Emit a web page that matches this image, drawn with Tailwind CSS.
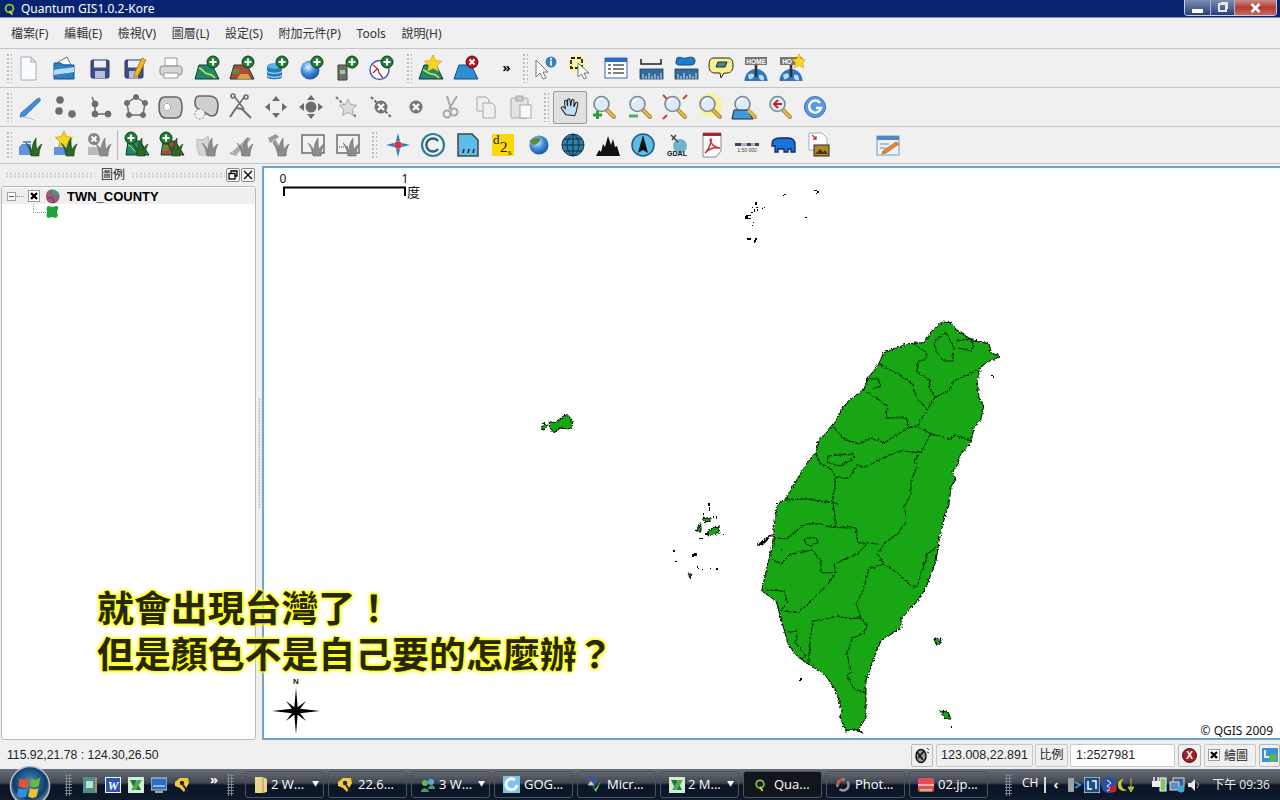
<!DOCTYPE html>
<html lang="zh-Hant">
<head>
    <meta charset="UTF-8">
    <title>Quantum GIS1.0.2-Kore</title>
    <script src="https://cdn.jsdelivr.net/npm/@tailwindcss/browser@4"></script>
</head>
<body class="w-[1280px] h-[800px] overflow-hidden flex flex-col bg-[#f0f0f0] text-[12px] text-[#222] font-['Noto_Sans','Noto_Sans_CJK_TC',sans-serif]">

    <!-- shared icon parts -->
    <svg class="absolute w-0 h-0" aria-hidden="true">
        <defs>
            <radialGradient id="globe" cx="40%" cy="35%" r="70%"><stop offset="0" stop-color="#e8f4ff"/><stop offset=".5" stop-color="#3f8fdc"/><stop offset="1" stop-color="#124f9c"/></radialGradient>
            <radialGradient id="orb" cx="50%" cy="40%" r="60%"><stop offset="0" stop-color="#3f8fc8"/><stop offset=".7" stop-color="#0f3c68"/><stop offset="1" stop-color="#7f98aa"/></radialGradient>
            <filter id="rough" filterUnits="userSpaceOnUse" x="500" y="300" width="560" height="450" color-interpolation-filters="sRGB"><feTurbulence type="turbulence" baseFrequency=".32" numOctaves="2" seed="4" result="n"/><feDisplacementMap in="SourceGraphic" in2="n" scale="3.500" xChannelSelector="R" yChannelSelector="G"/></filter>
            <g id="plus"><circle cx="20" cy="8" r="6" fill="#1e7d35" stroke="#0e3f1b"/><path d="M20 4.500v7M16.500 8h7" stroke="#fff" stroke-width="2.200"/></g>
            <g id="xred"><circle cx="20" cy="8" r="6" fill="#b11a22" stroke="#5a0c10"/><path d="M17.500 5.500l5 5M22.500 5.500l-5 5" stroke="#fff" stroke-width="1.800"/></g>
            <path id="star" d="M12 2l2.600 5.600 6 .7-4.400 4.100 1.200 6-5.400-3-5.400 3 1.200-6L3.400 8.300l6-.7z" fill="#f9d71c" stroke="#c79a10" stroke-width=".7"/>
            <g id="tuft"><path d="M14 26c-1-6-2-9-5-13 3 2 5 5 6 8 0-5 1-9 4-13 0 5 0 8 1 12 1-3 3-5 5-6-2 4-3 8-3 12z" fill="#2f6a22" stroke="#1a3d14" stroke-width=".6"/></g>
            <g id="tuftg"><path d="M14 26c-1-6-2-9-5-13 3 2 5 5 6 8 0-5 1-9 4-13 0 5 0 8 1 12 1-3 3-5 5-6-2 4-3 8-3 12z" fill="#8c8c8c" stroke="#6f6f6f" stroke-width=".6"/></g>
            <g id="lens"><path d="M17 17l7 7" stroke="#b98a2c" stroke-width="4" stroke-linecap="round"/><path d="M17 17l7 7" stroke="#f0c65e" stroke-width="1.600" stroke-linecap="round"/><circle cx="11.500" cy="11" r="7.500" fill="#dcebf6" stroke="#7d8a96" stroke-width="1.600"/><path d="M7 10a5 5 0 0 1 5-4" stroke="#fff" stroke-width="1.500" fill="none"/></g>
            <g id="ruler"><rect x="3" y="15" width="23" height="10" fill="#356a9c" stroke="#1d3d5c" stroke-width=".8"/><path d="M6 25v-5M9 25v-3M12 25v-6M15 25v-3M18 25v-5M21 25v-3M24 25v-6" stroke="#cfe6f5"/></g>
            <g id="earth"><path d="M2.500 27a11.500 12 0 0 1 23 0z" fill="#2f78c0"/><path d="M6 21c3-2 5-2 6 0s-3 5-5 4zM17 21c3-1 5 1 5 4s-4 1-5-1z" fill="#bcdcf2"/><path d="M14 11v12" stroke="#333" stroke-width="2.600"/></g>
        </defs>
    </svg>

    <!-- title bar -->
    <div class="h-[20px] shrink-0 flex items-start bg-[#f0f0f0]">
        <div class="h-[18px] flex-1 flex items-center bg-[#06246f] border-b border-[#7f93bc] relative">
            <svg class="w-[13px] h-[14px] ml-[3px]" viewBox="0 0 14 14"><circle cx="7" cy="6.500" r="4.200" fill="none" stroke="#8fc13c" stroke-width="2"/><path d="M7 9l3 4" stroke="#e8d23c" stroke-width="2"/></svg>
            <span class="ml-[5px] text-white text-[12px] leading-none">Quantum GIS1.0.2-Kore</span>
            <div class="absolute right-[3px] top-0 h-[16px] w-[93px] flex rounded-b-[4px] border border-t-0 border-[#c8d0e0] overflow-hidden">
                <div class="w-[26px] flex items-center justify-center bg-gradient-to-b from-[#7d8cb0] to-[#23407f] border-r border-[#aab5cc]"><div class="w-[11px] h-[4px] bg-white mt-[6px]"></div></div>
                <div class="w-[24px] flex items-center justify-center bg-gradient-to-b from-[#7d8cb0] to-[#23407f] border-r border-[#aab5cc]"><div class="w-[9px] h-[9px] border-2 border-[#e8e8e8] shadow-[2px_-2px_0_-1px_#e8e8e8]"></div></div>
                <div class="flex-1 flex items-center justify-center bg-gradient-to-b from-[#c88a88] via-[#b23a2c] to-[#c9665e]"><svg class="w-[11px] h-[10px]" viewBox="0 0 11 10"><path d="M1.500 1l8 8M9.500 1l-8 8" stroke="#fff" stroke-width="2.600"/></svg></div>
            </div>
        </div>
    </div>

    <!-- menu bar -->
    <div class="h-[29px] shrink-0 flex items-center gap-[15.700px] pl-[11px] border-b border-[#c4c4c4] text-[#333]">
        <span>檔案(F)</span><span>編輯(E)</span><span>檢視(V)</span><span>圖層(L)</span><span>設定(S)</span><span>附加元件(P)</span><span>Tools</span><span>說明(H)</span>
    </div>

    <!-- toolbar 1 -->
    <div class="h-[39px] shrink-0 flex items-center border-b border-[#c4c4c4] pl-[6px] pb-[1px]">
        <div class="w-[6px] h-[30px] bg-[radial-gradient(circle,#bdbdbd_1px,transparent_1.200px)] bg-[length:4px_4px]"></div>
        <div class="flex ml-[-2px]">
            <div class="w-[36px] flex justify-center"><svg class="w-7 h-7" viewBox="0 0 28 28"><path d="M7 3h10l5 5v18H7z" fill="#fbfcfe" stroke="#a3adc0"/><path d="M17 3v5h5z" fill="#dfe4ee" stroke="#a3adc0"/></svg></div>
            <div class="w-[36px] flex justify-center"><svg class="w-7 h-7" viewBox="0 0 28 28"><path d="M5 11l3-3 9-5 4 8z" fill="#fff" stroke="#667"/><path d="M4 9h7l2 2h11v14H4z" fill="#2f7fc8" stroke="#1c4f8a"/><path d="M4 16c7-2 13-1 20-3v5c-7 2-13 1-20 3z" fill="#b4dcf5"/></svg></div>
            <div class="w-[36px] flex justify-center"><svg class="w-7 h-7" viewBox="0 0 28 28"><rect x="5" y="6" width="18" height="18" rx="1.500" fill="#3e4f86" stroke="#2a3563"/><rect x="8" y="6.500" width="12" height="7" fill="#eceff7"/><rect x="9" y="17" width="10" height="7" fill="#b6c0de"/></svg></div>
            <div class="w-[35px] flex justify-center"><svg class="w-7 h-7" viewBox="0 0 28 28"><rect x="3" y="6" width="18" height="18" rx="1.500" fill="#3e4f86" stroke="#2a3563"/><rect x="6" y="6.500" width="12" height="7" fill="#eceff7"/><rect x="7" y="17" width="9" height="7" fill="#b6c0de"/><path d="M12 20L20 4l4 2-8 16-4 1z" fill="#f1b32c" stroke="#a87412" stroke-width=".8"/></svg></div>
            <div class="w-[36px] flex justify-center"><svg class="w-7 h-7" viewBox="0 0 28 28"><path d="M8 4h12v8H8z" fill="#fff" stroke="#999"/><rect x="3" y="12" width="22" height="9" rx="2.500" fill="#d6d6d6" stroke="#8a8a8a"/><path d="M7 19h14v5H7z" fill="#fff" stroke="#999"/></svg></div>
            <div class="w-[35px] flex justify-center"><svg class="w-7 h-7" viewBox="0 0 28 28"><path d="M6 11h13l7 14H2z" fill="#1d8a6e" stroke="#0c3b36"/><path d="M6 14c4 1 5 6 9 6s5 2 7 4" stroke="#e8df4a" fill="none" stroke-width="1.500"/><use href="#plus"/></svg></div>
            <div class="w-[35px] flex justify-center"><svg class="w-7 h-7" viewBox="0 0 28 28"><path d="M6 11h13l7 14H2z" fill="#a84a3c" stroke="#0c3b36"/><path d="M5 15h7l-2 5H4z" fill="#5f8a3a"/><path d="M12 20h8l3 5H9z" fill="#d8a23a"/><use href="#plus"/></svg></div>
            <div class="w-[34px] flex justify-center"><svg class="w-7 h-7" viewBox="0 0 28 28"><path d="M5 12v11c0 3 15 3 15 0V12z" fill="#1f7ec0"/><ellipse cx="12.500" cy="12" rx="7.500" ry="3" fill="#5bb0e6"/><path d="M5 17c0 3 15 3 15 0M5 21c0 3 15 3 15 0" stroke="#d6eefa" fill="none"/><use href="#plus"/></svg></div>
            <div class="w-[36px] flex justify-center"><svg class="w-7 h-7" viewBox="0 0 28 28"><circle cx="13" cy="16" r="9.500" fill="url(#globe)"/><use href="#plus"/></svg></div>
            <div class="w-[34px] flex justify-center"><svg class="w-7 h-7" viewBox="0 0 28 28"><path d="M6 11h9v15H6z" fill="#6a7268" stroke="#3e423c"/><rect x="8" y="16" width="5" height="4" fill="#a6c79a"/><use href="#plus"/></svg></div>
            <div class="w-[35px] flex justify-center"><svg class="w-7 h-7" viewBox="0 0 28 28"><circle cx="12.500" cy="16" r="9.500" fill="#fff" stroke="#3a5bb0" stroke-width="1.400"/><path d="M6 11l5 4 1 4 4 5M10 15l-4 4" stroke="#b8262c" fill="none" stroke-width="1.300"/><use href="#plus"/></svg></div>
        </div>
        <div class="w-[6px] h-[30px] ml-[8px] bg-[radial-gradient(circle,#bdbdbd_1px,transparent_1.200px)] bg-[length:4px_4px]"></div>
        <div class="flex ml-[1px]">
            <div class="w-[35px] flex justify-center"><svg class="w-7 h-7" viewBox="0 0 28 28"><path d="M7 11h12l7 14H2z" fill="#1d8a6e" stroke="#0c3b36"/><path d="M6 16c4 1 5 4 9 4s5 2 7 4" stroke="#e8df4a" fill="none" stroke-width="1.500"/><use href="#star" x="4" y="-1"/></svg></div>
            <div class="w-[35px] flex justify-center"><svg class="w-7 h-7" viewBox="0 0 28 28"><path d="M7 11h12l7 14H2z" fill="#2e8fd6" stroke="#114b7c"/><use href="#xred"/></svg></div>
        </div>
        <div class="w-[35px] text-center font-bold text-[13px] leading-none text-black ml-[6px]">»</div>
        <div class="w-[6px] h-[30px] ml-[-2px] bg-[radial-gradient(circle,#bdbdbd_1px,transparent_1.200px)] bg-[length:4px_4px]"></div>
        <div class="flex ml-[-1px]">
            <div class="w-[35px] flex justify-center"><svg class="w-7 h-7" viewBox="0 0 28 28"><path d="M5 6v17l4-4 3 6 3-1-3-6h5z" fill="#fff" stroke="#777"/><circle cx="20" cy="8" r="5.500" fill="#3a7fc4"/><path d="M20 6.500v5" stroke="#fff" stroke-width="1.800"/><circle cx="20" cy="4.700" r="1" fill="#fff"/></svg></div>
            <div class="w-[36px] flex justify-center"><svg class="w-7 h-7" viewBox="0 0 28 28"><circle cx="11" cy="10" r="9" fill="#f7f3a8"/><rect x="5" y="4" width="11" height="10" fill="none" stroke="#222" stroke-width="1.800" stroke-dasharray="4 2"/><path d="M12 9v14l3.500-3 2.500 5 2.500-1-2.500-5h5z" fill="#fff" stroke="#777"/></svg></div>
            <div class="w-[35px] flex justify-center"><svg class="w-7 h-7" viewBox="0 0 28 28"><rect x="3" y="4" width="22" height="20" fill="#fff" stroke="#2d6cc0"/><rect x="3" y="4" width="22" height="4" fill="#2d6cc0"/><path d="M6 11h3M11 11h11M6 15h3M11 15h11M6 19h3M11 19h11" stroke="#555" stroke-width="1.300"/></svg></div>
            <div class="w-[35px] flex justify-center"><svg class="w-7 h-7" viewBox="0 0 28 28"><path d="M4 5v5h20V5" fill="none" stroke="#222" stroke-width="1.500"/><use href="#ruler"/></svg></div>
            <div class="w-[35px] flex justify-center"><svg class="w-7 h-7" viewBox="0 0 28 28"><path d="M5 4c3-2 5 1 9 0s9-2 9 3-5 4-9 4-11 1-10-3z" fill="#1d7bd0" stroke="#114b7c"/><use href="#ruler"/></svg></div>
            <div class="w-[35px] flex justify-center"><svg class="w-7 h-7" viewBox="0 0 28 28"><path d="M7 4h14c4 0 5 3 5 8 0 4-2 7-6 7h-3l-3 5-1-5H8c-4 0-6-3-6-7 0-5 1-8 5-8z" fill="#f7f08e" stroke="#222"/><path d="M9 13l2-5h9l-2 5z" fill="#3c8f7a" stroke="#224"/></svg></div>
            <div class="w-[35px] flex justify-center"><svg class="w-7 h-7" viewBox="0 0 28 28"><rect x="3" y="3" width="22" height="8" fill="#757575"/><text x="14" y="9.500" text-anchor="middle" font-size="6.500" font-weight="700" fill="#fff" font-family="Liberation Sans">HOME</text><use href="#earth"/></svg></div>
            <div class="w-[35px] flex justify-center"><svg class="w-7 h-7" viewBox="0 0 28 28"><rect x="3" y="3" width="22" height="8" fill="#757575"/><text x="10" y="9.500" text-anchor="middle" font-size="6.500" font-weight="700" fill="#fff" font-family="Liberation Sans">HO</text><use href="#earth"/><use href="#star" x="14" y="-2" transform="scale(.85)"/></svg></div>
        </div>
    </div>

    <!-- toolbar 2 -->
    <div class="h-[39px] shrink-0 flex items-center border-b border-[#c4c4c4] pl-[6px]">
        <div class="w-[6px] h-[30px] bg-[radial-gradient(circle,#bdbdbd_1px,transparent_1.200px)] bg-[length:4px_4px]"></div>
        <div class="flex ml-[1px]">
            <div class="w-[34px] flex justify-center"><svg class="w-7 h-7" viewBox="0 0 28 28"><path d="M5 20L21 6c3-2 4 0 3 2L9 23l-5 1z" fill="#3d8fd6" stroke="#2a6cab" stroke-width=".8"/><path d="M5 24c5 0 9 1 13 3" stroke="#bbb" fill="none"/></svg></div>
            <div class="w-[35px] flex justify-center"><svg class="w-7 h-7" viewBox="0 0 28 28" fill="#6d6d6d"><circle cx="9" cy="7" r="3.800"/><circle cx="8" cy="18" r="3.800"/><circle cx="21" cy="21" r="3.800"/></svg></div>
            <div class="w-[36px] flex justify-center"><svg class="w-7 h-7" viewBox="0 0 28 28" fill="#6d6d6d" stroke="#6d6d6d"><path d="M6 4l3 7v10h13l3 1" fill="none" stroke-width="1.500"/><circle cx="9" cy="11" r="3"/><circle cx="9" cy="21" r="3"/><circle cx="22" cy="21" r="3"/></svg></div>
            <div class="w-[35px] flex justify-center"><svg class="w-7 h-7" viewBox="0 0 28 28" fill="#6d6d6d" stroke="#6d6d6d"><path d="M14 4l9 6-2 12H7L5 10z" fill="none" stroke-width="1.500"/><circle cx="14" cy="4" r="2.500"/><circle cx="23" cy="10" r="2.500"/><circle cx="21" cy="22" r="2.500"/><circle cx="7" cy="22" r="2.500"/><circle cx="5" cy="10" r="2.500"/></svg></div>
            <div class="w-[35px] flex justify-center"><svg class="w-7 h-7" viewBox="0 0 28 28"><path d="M8 4h11c5 0 6 4 6 10s-1 11-6 11H9c-5 0-7-5-7-11S3 4 8 4z" fill="#cfcfcf" stroke="#666" stroke-width="1.600"/><circle cx="10" cy="14" r="3.500" fill="#fff" stroke="#888" stroke-dasharray="2 1"/></svg></div>
            <div class="w-[35px] flex justify-center"><svg class="w-7 h-7" viewBox="0 0 28 28"><path d="M7 3h10c6 0 9 4 9 9s-1 11-6 11c-4 0-5-3-8-4-4-1-9-4-9-9 0-4 1-7 4-7z" fill="#cfcfcf" stroke="#666" stroke-width="1.600"/><circle cx="8" cy="21" r="5" fill="#f0f0f0" stroke="#777" stroke-dasharray="2 1.500"/></svg></div>
            <div class="w-[35px] flex justify-center"><svg class="w-7 h-7" viewBox="0 0 28 28" fill="none" stroke="#6d6d6d" stroke-width="1.500"><path d="M7 3l10 13M18 3L9 15"/><circle cx="6" cy="3" r="2"/><circle cx="19" cy="4" r="2"/><path d="M3 24l6-9 6 1 9 9" stroke-width="2"/></svg></div>
            <div class="w-[35px] flex justify-center"><svg class="w-7 h-7" viewBox="0 0 28 28" fill="#6d6d6d"><path d="M14 3l4 5h-8zM14 25l-4-5h8zM3 14l5-4v8zM25 14l-5 4v-8z"/></svg></div>
            <div class="w-[35px] flex justify-center"><svg class="w-7 h-7" viewBox="0 0 28 28" fill="#6d6d6d"><path d="M14 2l4 5h-8zM14 26l-4-5h8zM2 14l5-4v8zM26 14l-5 4v-8z"/><circle cx="14" cy="14" r="5.500"/></svg></div>
            <div class="w-[35px] flex justify-center"><svg class="w-7 h-7" viewBox="0 0 28 28"><path d="M4 4l20 20" stroke="#777" stroke-width="2" stroke-dasharray="3 2"/><path d="M16 6l2.600 5.600 6 .7-4.400 4.100 1.200 6-5.400-3-5.400 3 1.200-6-4.400-4.100 6-.7z" fill="#dcdcdc" stroke="#aaa"/></svg></div>
            <div class="w-[35px] flex justify-center"><svg class="w-7 h-7" viewBox="0 0 28 28"><path d="M4 4l20 20" stroke="#666" stroke-width="2" stroke-dasharray="3 2"/><circle cx="14" cy="14" r="6.500" fill="#777"/><path d="M11 11l6 6M17 11l-6 6" stroke="#fff" stroke-width="2.200"/></svg></div>
            <div class="w-[35px] flex justify-center"><svg class="w-7 h-7" viewBox="0 0 28 28"><circle cx="14" cy="14" r="9" fill="#ececec"/><circle cx="14" cy="14" r="6.500" fill="#777"/><path d="M11 11l6 6M17 11l-6 6" stroke="#fff" stroke-width="2.200"/></svg></div>
            <div class="w-[35px] flex justify-center"><svg class="w-7 h-7" viewBox="0 0 28 28" fill="none" stroke="#a8a8a8" stroke-width="2"><path d="M10 3l4 13M20 3l-8 13"/><circle cx="10" cy="21" r="3.500"/><circle cx="17" cy="19" r="3.500"/></svg></div>
            <div class="w-[35px] flex justify-center"><svg class="w-7 h-7" viewBox="0 0 28 28" fill="#efefef" stroke="#a8a8a8"><path d="M5 4h9l3 3v11H5z"/><path d="M11 10h9l3 3v12H11z"/></svg></div>
            <div class="w-[35px] flex justify-center"><svg class="w-7 h-7" viewBox="0 0 28 28" fill="#e4e4e4" stroke="#a8a8a8"><rect x="4" y="5" width="17" height="20" rx="1.500"/><rect x="9" y="3" width="7" height="5" fill="#ccc"/><rect x="13" y="12" width="11" height="13" fill="#fafafa"/></svg></div>
        </div>
        <div class="w-[6px] h-[30px] ml-[5px] bg-[radial-gradient(circle,#bdbdbd_1px,transparent_1.200px)] bg-[length:4px_4px]"></div>
        <div class="flex items-center ml-[4px]">
            <div class="w-[34px] h-[33px] flex justify-center items-center bg-[#e0e0e0] border border-[#9a9a9a] rounded-[2px] mr-[-1px]"><svg class="w-[22px] h-[22px]" viewBox="0 0 28 28"><path d="M9 24l-6-8c-1-2 1-3 3-2l2 2-1-9c0-2 3-2 3 0l1 6 0-8c0-2 3-2 3 0l1 8 1-7c0-2 3-2 3 0l0 8 2-5c1-2 3-1 3 1l-2 10-2 5z" fill="#bfe0f8" stroke="#222" stroke-width="1.300"/></svg></div>
            <div class="w-[36px] flex justify-center"><svg class="w-7 h-7" viewBox="0 0 28 28"><use href="#lens"/><path d="M3 22h9M7.500 18v8" stroke="#2f9c3c" stroke-width="3"/></svg></div>
            <div class="w-[35px] flex justify-center"><svg class="w-7 h-7" viewBox="0 0 28 28"><use href="#lens"/><path d="M3 23h9" stroke="#58a868" stroke-width="3"/></svg></div>
            <div class="w-[35px] flex justify-center"><svg class="w-7 h-7" viewBox="0 0 28 28"><use href="#lens"/><path d="M2 2l4 4M26 2l-4 4M2 26l4-4" stroke="#d23c3c" stroke-width="2"/></svg></div>
            <div class="w-[35px] flex justify-center"><svg class="w-7 h-7" viewBox="0 0 28 28"><circle cx="14" cy="12" r="12" fill="#f6f3a4"/><use href="#lens"/></svg></div>
            <div class="w-[35px] flex justify-center"><svg class="w-7 h-7" viewBox="0 0 28 28"><use href="#lens"/><path d="M3 17l13 0 6 9H1z" fill="#3d9bd6" stroke="#224"/><path d="M17 17l7 7" stroke="#e0b44c" stroke-width="3.500"/></svg></div>
            <div class="w-[35px] flex justify-center"><svg class="w-7 h-7" viewBox="0 0 28 28"><use href="#lens"/><path d="M16 11H9M12 7l-4 4 4 4" stroke="#c8202a" stroke-width="2" fill="none"/></svg></div>
            <div class="w-[35px] flex justify-center"><svg class="w-7 h-7" viewBox="0 0 28 28"><circle cx="14" cy="14" r="10.500" fill="#5c98e6" stroke="#3a6cc0"/><path d="M19 10a6 6 0 1 0 1 5h-5" fill="none" stroke="#fff" stroke-width="2.400"/></svg></div>
        </div>
    </div>

    <!-- toolbar 3 -->
    <div class="h-[37px] shrink-0 flex items-center border-b border-[#c4c4c4] pl-[6px]">
        <div class="w-[6px] h-[28px] bg-[radial-gradient(circle,#bdbdbd_1px,transparent_1.200px)] bg-[length:4px_4px]"></div>
        <div class="flex ml-[1px]">
            <div class="w-[35px] flex justify-center"><svg class="w-7 h-7" viewBox="0 0 28 28"><path d="M2 17l3-3h9v11H2z" fill="#5f95dc"/><path d="M6 12h8" stroke="#5f95dc" stroke-width="2"/><use href="#tuft"/></svg></div>
            <div class="w-[35px] flex justify-center"><svg class="w-7 h-7" viewBox="0 0 28 28"><path d="M2 17h14v8H2z" fill="#5f95dc"/><use href="#star" x="0" y="-1"/><use href="#tuft"/></svg></div>
            <div class="w-[34px] flex justify-center"><svg class="w-7 h-7" viewBox="0 0 28 28"><path d="M2 17h14v8H2z" fill="#bbb"/><circle cx="8" cy="9" r="6" fill="#888"/><path d="M5.500 6.500l5 5M10.500 6.500l-5 5" stroke="#fff" stroke-width="1.800"/><use href="#tuftg"/></svg></div>
            <div class="w-[1px] h-[30px] bg-[#b5b5b5] mr-[1px]"></div>
            <div class="w-[35px] flex justify-center"><svg class="w-7 h-7" viewBox="0 0 28 28"><path d="M5 11h12l9 14H3z" fill="#1d8a6e" stroke="#0c3b36"/><path d="M5 15c4 1 5 6 9 7" stroke="#e8df4a" fill="none"/><use href="#tuft"/><use href="#plus" x="-12"/></svg></div>
            <div class="w-[35px] flex justify-center"><svg class="w-7 h-7" viewBox="0 0 28 28"><path d="M5 11h12l9 14H3z" fill="#a84a3c" stroke="#0c3b36"/><path d="M5 15h7l-2 6H4z" fill="#5f8a3a"/><use href="#tuft"/><use href="#plus" x="-12"/></svg></div>
            <div class="w-[35px] flex justify-center"><svg class="w-7 h-7" viewBox="0 0 28 28"><path d="M4 9l6 1 5-4 1 6 5 6-5 7H6L4 17z" fill="#d5d5d5" stroke="#bbb"/><use href="#tuftg"/></svg></div>
            <div class="w-[36px] flex justify-center"><svg class="w-7 h-7" viewBox="0 0 28 28"><path d="M4 22L20 7l3 2L9 24z" fill="#aaa"/><path d="M2 23l7 2" stroke="#aaa" stroke-width="2"/><use href="#tuftg"/></svg></div>
            <div class="w-[35px] flex justify-center"><svg class="w-7 h-7" viewBox="0 0 28 28"><path d="M4 8l8-4 3 3-9 6zM8 11l8 13 3-2-8-13z" fill="#9a9a9a"/><use href="#tuftg"/></svg></div>
            <div class="w-[35px] flex justify-center"><svg class="w-7 h-7" viewBox="0 0 28 28"><rect x="3" y="5" width="22" height="18" fill="#f2f2f2" stroke="#6d6d6d" stroke-width="1.500"/><use href="#tuftg"/></svg></div>
            <div class="w-[35px] flex justify-center"><svg class="w-7 h-7" viewBox="0 0 28 28"><rect x="3" y="5" width="22" height="18" fill="#f2f2f2" stroke="#6d6d6d" stroke-width="1.500"/><path d="M5 17h14" stroke="#444" stroke-dasharray="1 1"/><use href="#tuftg"/></svg></div>
        </div>
        <div class="w-[6px] h-[28px] ml-[6px] bg-[radial-gradient(circle,#bdbdbd_1px,transparent_1.200px)] bg-[length:4px_4px]"></div>
        <div class="flex ml-[3px]">
            <div class="w-[35px] flex justify-center"><svg class="w-7 h-7" viewBox="0 0 28 28"><path d="M14 2l2 8h-4zM14 26l-2-8h4zM2 14l8-2v4zM26 14l-8 2v-4z" fill="#2d7fc0"/><circle cx="14" cy="14" r="3.800" fill="#d23040"/></svg></div>
            <div class="w-[35px] flex justify-center"><svg class="w-7 h-7" viewBox="0 0 28 28"><circle cx="14" cy="14" r="11" fill="#eaf4f7" stroke="#2f7f96" stroke-width="2.200"/><path d="M19 10a6.500 6.500 0 1 0 0 8" fill="none" stroke="#3a5f6e" stroke-width="2.400"/></svg></div>
            <div class="w-[35px] flex justify-center"><svg class="w-7 h-7" viewBox="0 0 28 28"><path d="M4 3h14l6 6v16H4z" fill="#5cbcec" stroke="#444" stroke-width="1.500"/><path d="M9 22l1-4M14 22l1-4M19 22l1-4" stroke="#222" stroke-width="1.500"/></svg></div>
            <div class="w-[35px] flex justify-center"><svg class="w-7 h-7" viewBox="0 0 28 28"><rect x="3" y="3" width="22" height="22" fill="#fbd80c"/><text x="4" y="13" font-size="13" fill="#111" font-family="Liberation Serif">d</text><text x="11" y="21" font-size="15" fill="#111" font-family="Liberation Serif">2</text><text x="19" y="24" font-size="9" fill="#111" font-family="Liberation Serif">s</text></svg></div>
            <div class="w-[35px] flex justify-center"><svg class="w-7 h-7" viewBox="0 0 28 28"><circle cx="15" cy="14" r="9.500" fill="url(#globe)"/><path d="M5 10c4-3 8-4 11-3 1 3-2 6-6 7z" fill="#5f8a3a"/></svg></div>
            <div class="w-[35px] flex justify-center"><svg class="w-7 h-7" viewBox="0 0 28 28"><circle cx="14" cy="14" r="11" fill="#2f7fa8" stroke="#234"/><path d="M3 14h22M14 3v22M5 8h18M5 20h18M14 3c-8 5-8 17 0 22M14 3c8 5 8 17 0 22" stroke="#0c2a44" fill="none"/></svg></div>
            <div class="w-[35px] flex justify-center"><svg class="w-7 h-7" viewBox="0 0 28 28"><path d="M2 25l3-6 2 2 2-8 2 3 3-11 3 9 2-6 2 8 2-1 3 10z" fill="#111"/></svg></div>
            <div class="w-[35px] flex justify-center"><svg class="w-7 h-7" viewBox="0 0 28 28"><circle cx="14" cy="14" r="11" fill="#5cbcec" stroke="#2a5f7c" stroke-width="1.600"/><path d="M14 4l5 18-5-3-5 3z" fill="#111"/></svg></div>
            <div class="w-[35px] flex justify-center"><svg class="w-7 h-7" viewBox="0 0 28 28"><circle cx="16" cy="15" r="7" fill="#6fb5c8"/><path d="M7 4l7 7M12 4l-4 5" stroke="#444" stroke-width="1.500"/><text x="13" y="25" text-anchor="middle" font-size="7" font-weight="700" fill="#111" font-family="Liberation Sans">GDAL</text></svg></div>
            <div class="w-[34px] flex justify-center"><svg class="w-7 h-7" viewBox="0 0 28 28"><path d="M5 2h18v18l-5 6H5z" fill="#fff" stroke="#888"/><rect x="5" y="2" width="18" height="3" fill="#b8202a"/><path d="M7 22c4-3 7-13 6-14-2 0 0 8 9 9-6-1-11 1-15 5z" fill="none" stroke="#d0262e" stroke-width="1.500"/></svg></div>
            <div class="w-[36px] flex justify-center"><svg class="w-7 h-7" viewBox="0 0 28 28"><rect x="2" y="12" width="24" height="3" fill="#445"/><rect x="8" y="12" width="6" height="3" fill="#9db8cc"/><rect x="18" y="12" width="4" height="3" fill="#9db8cc"/><text x="14" y="20.500" text-anchor="middle" font-size="5" fill="#444" font-family="Liberation Sans">1:50 000</text></svg></div>
            <div class="w-[35px] flex justify-center"><svg class="w-7 h-7" viewBox="0 0 28 28"><path d="M3 13c0-5 4-6 8-6h8c5 0 7 3 7 7v7h-4v-3h-3v3h-4v-3H9v3H6v-6H3z" fill="#1d72d8" stroke="#0a2c66" stroke-width="1.300"/></svg></div>
            <div class="w-[35px] flex justify-center"><svg class="w-7 h-7" viewBox="0 0 28 28"><path d="M5 2h13l5 5v12H5z" fill="#fff" stroke="#a3adc0"/><rect x="10" y="14" width="15" height="11" fill="#b68a22" stroke="#224"/><path d="M11 23l5-5 3 3 2-2 3 4z" fill="#4a3a10"/><path d="M8 4l4 4M12 5v3H9" stroke="#d23030" stroke-width="1.300" fill="none"/></svg></div>
        </div>
        <div class="w-[35px] flex justify-center ml-[35px]"><svg class="w-7 h-7" viewBox="0 0 28 28"><rect x="3" y="5" width="22" height="19" fill="#e9f1fb" stroke="#7d96b8"/><rect x="3" y="5" width="22" height="4" fill="#4f86c6"/><path d="M6 13h9M6 17h6" stroke="#888"/><path d="M9 20l13-9 3 2-13 9-4 1z" fill="#e8892c" stroke="#a85c12" stroke-width=".7"/></svg></div>
    </div>

    <!-- main area -->
    <div class="flex-1 min-h-0 flex relative">
        <!-- legend dock -->
        <div class="w-[257px] shrink-0 flex flex-col">
            <div class="h-[22px] flex items-center pl-[5px] text-[#222]">
                <div class="w-[90px] h-[6px] bg-[radial-gradient(circle,#cfcfcf_1px,transparent_1.200px)] bg-[length:4px_3px]"></div>
                <span class="w-[36px] text-center leading-none">圖例</span>
                <div class="w-[94px] h-[6px] bg-[radial-gradient(circle,#cfcfcf_1px,transparent_1.200px)] bg-[length:4px_3px]"></div>
                <div class="w-[14px] h-[14px] ml-[1px] flex items-center justify-center border border-[#8a8a8a] rounded-[2px] bg-[#f8f8f8]"><svg class="w-[10px] h-[10px]" viewBox="0 0 10 10"><path d="M3 3V1h6v5H7" fill="none" stroke="#000" stroke-width="1.300"/><rect x="1" y="3.500" width="6" height="5.500" fill="none" stroke="#000" stroke-width="1.300"/></svg></div>
                <div class="w-[14px] h-[14px] ml-[1px] flex items-center justify-center border border-[#8a8a8a] rounded-[2px] bg-[#f8f8f8]"><svg class="w-[10px] h-[10px]" viewBox="0 0 10 10"><path d="M1 1l8 8M9 1l-8 8" stroke="#000" stroke-width="1.300"/></svg></div>
            </div>
            <div class="flex-1 ml-[1px] mb-[1px] mr-[1px] bg-white border border-[#b8b8b8] rounded-[3px] pt-[1px]">
                <div class="h-[16px] flex items-center bg-[#efefef]">
                    <div class="w-[9px] h-[9px] ml-[5px] flex items-center justify-center border border-[#a0a0a0] bg-white"><div class="w-[5px] h-[1px] bg-[#555]"></div></div>
                    <div class="w-[8px] border-t border-dotted border-[#999]"></div>
                    <div class="w-[12px] h-[12px] ml-[4px] flex items-center justify-center border border-[#9a9a9a] bg-white"><svg class="w-[10px] h-[10px]" viewBox="0 0 10 10"><path d="M2 2l6 6M8 2l-6 6" stroke="#000" stroke-width="2.400"/></svg></div>
                    <svg class="w-[15px] h-[15px] ml-[5px]" viewBox="0 0 15 15"><path d="M7 .5c4 0 7.500 3 7.500 7s-3 7-7 7-6.500-3-6.500-7 2-7 6-7z" fill="#9a5a78"/><path d="M5 1c4-1 9 1 9.500 6L9 6z" fill="#3d9a82"/><path d="M2 10l5-2 2 6" fill="none" stroke="#55303f" stroke-width=".7"/></svg>
                    <span class="ml-[7px] font-bold text-[13px] leading-none font-['Liberation_Sans',sans-serif] text-black">TWN_COUNTY</span>
                </div>
                <div class="h-[15px] flex items-center">
                    <div class="w-[13px] h-[9px] ml-[31px] mb-[7px] border-l border-b border-dotted border-[#999]"></div>
                    <svg class="w-[13px] h-[13px]" viewBox="0 0 13 13"><path d="M1 2c2-2 3 0 5 0s5-2 6 0-1 3-1 5 2 3 0 5-3 0-5 0-4 2-5 0 0-3 0-5-1-3 0-5z" fill="#20a23a"/></svg>
                </div>
            </div>
        </div>

        <!-- splitter -->
        <div class="w-[5px] shrink-0 flex items-center justify-center"><div class="w-[3px] h-[110px] bg-[radial-gradient(circle,#cfcfcf_1px,transparent_1.200px)] bg-[length:3px_3px]"></div></div>

        <!-- map canvas -->
        <div class="w-[1018px] mt-[2px] mb-[1px] border-2 border-r-0 border-[#6fa4cf] bg-white relative overflow-hidden">
            <svg class="absolute left-0 top-0 w-[1016px] h-[570px]" viewBox="264 168 1016 570">
                <g filter="url(#rough)">
                    <g fill="#18a614" stroke="#000" stroke-width="1" stroke-linejoin="round">
                        <path d="M941.700 321L950 321.700 955 328 961.700 333 973 340 988 342.700 990 351.700 999 355.700 985 361.700 980 366.700 976 380 978 396.700 982.700 405 980 418 973 426.700 970 441.700 960 453 956.700 463 951.700 471.700 955 478 950 486.700 948 503 942.700 520 938 540 935 560 925 586.700 916.700 600 900 618 900 626.700 880 640 875 651.700 865 680 865 716.700 858 728 861.700 732 853 728 845 730 839 716.700 841 710 835 690 825 675 808 663 795 655 786.700 641.700 778 610 775 600 760.700 590 766.700 563 773 540 773 526.700 776.700 503 785 498 795 480 803 466.700 815 451.700 818 440 833 423 843 405 851.700 397 863 388 866 378 876.700 365 883 351.700 906.700 342.700 923 341.700 930 331.700z"/>
                        <path d="M548.300 420.700L555 421.700 560 418 563 414.500 568 415 571 419 571.700 426.700 566 428 560 427 553 431.700 548.300 426z"/>
                        <path d="M540 428L543 423 546.700 425 543 429z"/>
                        <path d="M707 531L712 527 718 526 719 532 712 534 707 535z"/>
                        <path d="M702 517L710 518 708 521 703 520z"/>
                        <path d="M696 531L698 523 700 523 700 531z"/>
                        <path d="M933 638L940 638 939 643 935 643z"/>
                        <path d="M938 710L947 711 950 718 945 718z"/>
                        <path d="M687 573L691 573 689 577z"/>
                    </g>
                    <g fill="none" stroke="#062d06" stroke-width="1" stroke-linejoin="round">
                        <path d="M911.700 342.300L925 351.700 926.700 356.700 916.700 361.700 916.700 371.700 930 380 928.300 386.700 934 396"/>
                        <path d="M980 368L953 380 948 390 934 396 926.700 408 916.700 425"/>
                        <path d="M936.700 338L945 331.700 953 346.700 951.700 360 943 360 936.700 353 933 343z"/>
                        <path d="M955 340L970 338 973 345 970 350 956.700 346.700"/>
                        <path d="M878 363L896.700 373 911.700 383 915 395 925 408"/>
                        <path d="M864 387L866.700 378 876.700 378 880 385 871.700 388"/>
                        <path d="M863.300 389L886.700 405 885 416.700 905 417 908 426.700"/>
                        <path d="M908 426.700L883 441.700 870 437 858 443 843 438 831.700 425"/>
                        <path d="M908 426.700L916.700 426 930 432.700 950 439 953 434 970 440"/>
                        <path d="M930 432.700L920 451.700 900 450 886.700 455 863 466.700 856.700 464 848 477.700 835 476 830 468 820 463 815 453"/>
                        <path d="M826.700 455L851.700 453 853 457 840 465 826.700 462z"/>
                        <path d="M920 451.700L913 460 916.700 465 910 480 910 493 903 506.700 905.700 516.700 905 521.700 896.700 533 883 543 876.700 553 883 563 900 575 911.700 586.700 916.700 585 926.700 553 935 546"/>
                        <path d="M835 476.700L831.700 500 835 523 833 528"/>
                        <path d="M785 499L806.700 498 838 503"/>
                        <path d="M773 537L785 538 805 523 818 522.700 833 526.700 855 526.700 856.700 541.700 878 543"/>
                        <path d="M803 538L815 536.700 817 541.700 810 545 805 543z"/>
                        <path d="M770.700 558L780 563 790 553 811.700 549 820 560 820 571.700 835 571.700 833 563 856.700 553 865 544"/>
                        <path d="M835 571.700L828 583 810 600 798 611.700 780 610 786.700 601.700 783 590 765 589.300"/>
                        <path d="M883 563L868 568 861.700 591.700 855 603 860 616.700 866 625 863 633 851.700 636.700 846 653 850 671.700 846.700 675 853 688 864 692"/>
                        <path d="M860 616.700L850 618 836.700 615 825 618 811.700 620 808 653 808 662.700"/>
                        <path d="M786.700 631.700L796.700 630 795 643 805 655 800 658"/>
                    </g>
                    <path fill="#000" d="M757 543l14-10h2l-12 12h-3z"/>
                </g>
                <!-- outlying islets -->
                <path fill="#000" d="M708 503h2v3h-2zM709 507h1v4h-1zM713 516h1v2h-1zM716 516h1v3h-1zM703 513h1v2h-1zM723 534h1v1h-1zM699 538h4v1h-4zM704 522h2v1h-2zM705 533h3v2h-3zM695 530h3v1h-3zM700 526h1v1h-1zM673 550h2v2h-2zM675 561h2v1h-2zM692 554h2v3h-2zM694 553h3v3h-3zM697 566h1v2h-1zM698 568h1v1h-1zM702 569h1v1h-1zM710 568h1v1h-1zM716 568h2v2h-2zM991 375h2v1h-2zM993 376h1v2h-1zM800 678h2v2h-2zM799 680h2v1h-2zM951 726h1v2h-1zM755 202h2v3h-2zM754 209h1v3h-1zM756 207h2v1h-2zM757 209h1v2h-1zM751 212h2v1h-2zM746 215h5v1h-5zM745 216h3v3h-3zM748 218h3v1h-3zM752 207h1v1h-1zM762 208h1v1h-1zM764 207h1v1h-1zM753 222h1v1h-1zM752 225h1v1h-1zM747 238h4v2h-4zM755 238h2v2h-2zM754 240h2v2h-2zM754 242h1v1h-1zM784 194h2v1h-2zM783 195h1v1h-1zM814 190h3v1h-3zM817 191h2v2h-2zM816 193h1v1h-1zM805 217h2v1h-2zM976 339h1v1h-1zM781 549h1v1h-1z"/>
                <!-- scale bar -->
                <path d="M284 196v-8.500h121v8.500" fill="none" stroke="#000" stroke-width="2"/>
                <text x="283" y="183" text-anchor="middle" font-size="12" fill="#111" font-family="Noto Sans">0</text>
                <text x="405" y="183" text-anchor="middle" font-size="12" fill="#111" font-family="Noto Sans">1</text>
                <text x="407" y="197" font-size="13" fill="#111" font-family="Noto Sans CJK TC">度</text>
                <!-- north arrow -->
                <text x="296" y="684" text-anchor="middle" font-size="8" font-weight="700" fill="#111" font-family="Liberation Sans">N</text>
                <path d="M296 688l1.800 20.500 22.200 2.500-22.200 2.500-1.800 20.500-1.800-20.500-22.200-2.500 22.200-2.500z" fill="#000"/>
                <path d="M286 701l10 7.500 10-7.500-7.500 10 7.500 10-10-7.500-10 7.500 7.500-10z" fill="#000"/>
            </svg>
            <span class="absolute right-[7px] bottom-[1px] text-[12px] leading-none text-[#111]">© QGIS 2009</span>
        </div>

        <!-- overlay caption -->
        <div class="absolute left-[97px] top-[419px] text-[36.900px] leading-[46px] font-bold whitespace-nowrap text-[#26260a] font-['Noto_Sans_CJK_TC',sans-serif] [text-shadow:0_0_2px_#ffff00,0_0_2px_#ffff00,0_0_3px_#ffff00,0_0_4px_#ffff00,0_0_4px_#ffff00]">
            <div>就會出現台灣了！</div>
            <div>但是顏色不是自己要的怎麼辦？</div>
        </div>
    </div>

    <!-- status bar -->
    <div class="h-[28px] shrink-0 flex items-center pl-[7px] text-[#222] font-['Liberation_Sans','Noto_Sans_CJK_TC',sans-serif]">
        <span class="text-[12.200px]">115.92,21.78 : 124.30,26.50</span>
        <div class="ml-auto flex items-center h-[23px]">
            <div class="w-[22px] h-full flex items-center justify-center border border-[#b8b8b8] rounded-[2px]"><svg class="w-[18px] h-[18px]" viewBox="0 0 18 18"><ellipse cx="8" cy="10" rx="5" ry="6.500" fill="#999" stroke="#111" stroke-width="1.500"/><path d="M4 6l6 8M5 12l6-7" stroke="#111" stroke-width="1.500"/><path d="M14 2l2 2M16 7l-2-1" stroke="#333"/></svg></div>
            <div class="w-[97px] h-full ml-[3px] flex items-center justify-center border border-[#c8c8c8] rounded-[2px] text-[12.500px]">123.008,22.891</div>
            <div class="w-[33px] h-full ml-[2px] flex items-center justify-center border border-[#c8c8c8] rounded-[2px]">比例</div>
            <div class="w-[105px] h-full ml-[2px] flex items-center pl-[5px] bg-white border border-[#c8c8c8] rounded-[2px] text-[12.500px]">1:2527981</div>
            <div class="w-[23px] h-full ml-[3px] flex items-center justify-center border border-[#b8b8b8] rounded-[2px]"><div class="w-[15px] h-[15px] rounded-full bg-[#a02028] border border-[#4a1010] text-white text-[10px] leading-[13px] text-center font-bold">X</div></div>
            <div class="w-[52px] h-full ml-[3px] flex items-center gap-[4px] pl-[3px] border border-[#c8c8c8] rounded-[2px] font-['Noto_Sans_CJK_TC',sans-serif]"><span class="w-[12px] h-[12px] flex items-center justify-center bg-white border border-[#9a9a9a]"><svg class="w-[10px] h-[10px]" viewBox="0 0 10 10"><path d="M2 2l6 6M8 2l-6 6" stroke="#000" stroke-width="2.400"/></svg></span><span>繪圖</span></div>
            <div class="w-[21px] h-full ml-[3px] flex items-center justify-center border border-[#b8b8b8] rounded-[2px]"><svg class="w-[18px] h-[18px]" viewBox="0 0 18 18"><rect x="1" y="2" width="16" height="14" fill="#3d8fd6"/><path d="M4 4v7h6" stroke="#e6f0fa" stroke-width="2" fill="none"/><circle cx="12" cy="12" r="4" fill="#58b848"/></svg></div>
        </div>
    </div>

    <!-- windows taskbar -->
    <div class="h-[31px] shrink-0 flex items-center bg-[linear-gradient(#6a7078_0,#3f4650_45%,#0b1424_52%,#0e1a2e_100%)] text-white text-[13px] whitespace-nowrap relative font-['Open_Sans','Noto_Sans_CJK_TC',sans-serif]">
        <svg class="absolute left-[9px] top-[-4px] w-[42px] h-[42px]" viewBox="0 0 44 44">
            <circle cx="22" cy="22" r="20.500" fill="url(#orb)" stroke="#b8c6d0" stroke-width="1.500"/>
            <path d="M11 14c4 2 7 2 10 0l-1 9c-3 2-6 1-10-1z" fill="#e0552c"/><path d="M23 14c3 2 6 2 10-1l-2 9c-3 2-6 2-9 0z" fill="#6fb73c"/>
            <path d="M10 24c4 2 7 2 10 0l-2 9c-3 2-6 2-10-1z" fill="#2f8fdc"/><path d="M22 24c3 2 6 2 9 0l-2 9c-3 2-6 2-9 0z" fill="#f2c02c"/>
        </svg>
        <div class="w-[7px] h-[22px] ml-[65px] bg-[radial-gradient(circle,#7a828c_1px,transparent_1.200px)] bg-[length:3px_3px]"></div>

        <!-- quick launch -->
        <div class="flex items-center gap-[7px] ml-[10px]">
            <svg class="w-[16px] h-[16px]" viewBox="0 0 16 16"><rect x="1" y="0" width="14" height="16" fill="#4f8f8a"/><rect x="4" y="4" width="7" height="7" fill="#c2dcd6"/><path d="M14 1v14" stroke="#d08a5a" stroke-width="2" stroke-dasharray="2 1"/></svg>
            <svg class="w-[16px] h-[16px]" viewBox="0 0 16 16"><rect width="16" height="16" fill="#f2f6ff"/><rect x="1" y="1" width="14" height="14" fill="#2d56b8"/><text x="8" y="13" text-anchor="middle" font-size="12" font-style="italic" font-weight="700" fill="#fff" font-family="Liberation Serif">W</text></svg>
            <svg class="w-[16px] h-[16px]" viewBox="0 0 16 16"><rect width="16" height="16" fill="#d4ecd2"/><path d="M2 3h6l5 10H7z" fill="#1f7a34"/><path d="M14 3H9L3 13h5z" fill="#52a85c"/></svg>
            <svg class="w-[16px] h-[16px]" viewBox="0 0 16 16"><rect y="1" width="16" height="12" fill="#2d6cc0" stroke="#c8d8e8"/><path d="M2 9h12" stroke="#fff"/><rect x="4" y="14" width="8" height="2" fill="#9aa"/></svg>
            <svg class="w-[16px] h-[16px]" viewBox="0 0 16 16"><path d="M1 5l5-4h8l1 5-5 9-4-4-5-2z" fill="#f2c83c"/><circle cx="8" cy="6" r="2.200" fill="#222"/><path d="M9 8l5 7" stroke="#222" stroke-width="2"/></svg>
        </div>
        <span class="ml-[20px] mb-[10px] text-[13px] leading-none font-bold">»</span>
        <div class="w-[7px] h-[22px] ml-[9px] bg-[radial-gradient(circle,#7a828c_1px,transparent_1.200px)] bg-[length:3px_3px]"></div>

        <!-- task buttons -->
        <div class="flex gap-[4px] ml-[11px]">
            <div class="w-[79px] h-[27px] flex items-center pl-[8px] pr-[4px] gap-[3px] border border-[#4d545e] rounded-[3px]"><svg class="w-[14px] h-[17px] shrink-0" viewBox="0 0 14 17"><path d="M1 1h8l4 2v13l-4 1H1z" fill="#e8d68a"/><path d="M9 1v16" stroke="#a89a50"/></svg><span class="flex-1">2 W...</span><span class="text-[7px]">▼</span></div>
            <div class="w-[79px] h-[27px] flex items-center pl-[8px] gap-[5px] border border-[#4d545e] rounded-[3px]"><svg class="w-[16px] h-[16px] shrink-0" viewBox="0 0 16 16"><path d="M1 5l5-4h8l1 5-5 9-4-4-5-2z" fill="#f2c83c"/><circle cx="8" cy="6" r="2.200" fill="#222"/><path d="M9 8l5 7" stroke="#222" stroke-width="2"/></svg><span>22.6...</span></div>
            <div class="w-[79px] h-[27px] flex items-center pl-[8px] pr-[4px] gap-[3px] border border-[#4d545e] rounded-[3px]"><svg class="w-[16px] h-[16px] shrink-0" viewBox="0 0 16 16"><circle cx="5" cy="6" r="3" fill="#5cb85c"/><circle cx="11" cy="5" r="3" fill="#5aa8e0"/><path d="M1 15c0-5 7-5 8 0zM8 12c1-5 7-5 7 0z" fill="#4a9a6a"/></svg><span class="flex-1">3 W...</span><span class="text-[7px]">▼</span></div>
            <div class="w-[79px] h-[27px] flex items-center pl-[8px] gap-[4px] border border-[#4d545e] rounded-[3px]"><svg class="w-[17px] h-[17px] shrink-0" viewBox="0 0 17 17"><rect width="17" height="17" fill="#7cc4f0"/><path d="M12 4a5.500 5.500 0 1 0 2 5" stroke="#fff" stroke-width="3" fill="none"/></svg><span>GOG...</span></div>
            <div class="w-[79px] h-[27px] flex items-center pl-[8px] gap-[5px] border border-[#4d545e] rounded-[3px]"><svg class="w-[16px] h-[17px] shrink-0" viewBox="0 0 16 17"><path d="M2 1l9 2-2 8-7-1z" fill="#3a56a8"/><path d="M6 10l3 3 6-8-5 11z" fill="#7cc46a"/><path d="M5 5l3 4H2z" fill="#f2d24c"/></svg><span>Micr...</span></div>
            <div class="w-[79px] h-[27px] flex items-center pl-[8px] pr-[4px] gap-[3px] border border-[#4d545e] rounded-[3px]"><svg class="w-[16px] h-[16px] shrink-0" viewBox="0 0 16 16"><rect width="16" height="16" fill="#d4ecd2"/><path d="M2 3h6l5 10H7z" fill="#1f7a34"/><path d="M14 3H9L3 13h5z" fill="#52a85c"/></svg><span class="flex-1">2 M...</span><span class="text-[7px]">▼</span></div>
            <div class="w-[79px] h-[27px] flex items-center pl-[10px] gap-[8px] border border-[#4d545e] rounded-[3px] bg-[#11151c]"><svg class="w-[12px] h-[16px] shrink-0" viewBox="0 0 14 16"><circle cx="7" cy="7" r="4.500" fill="none" stroke="#8fc13c" stroke-width="2"/><path d="M7 10l3 5" stroke="#e8d23c" stroke-width="2"/></svg><span>Qua...</span></div>
            <div class="w-[79px] h-[27px] flex items-center pl-[8px] gap-[4px] border border-[#4d545e] rounded-[3px]"><svg class="w-[16px] h-[16px] shrink-0" viewBox="0 0 16 16"><circle cx="8" cy="8" r="5.500" fill="none" stroke="#9a9a9a" stroke-width="2.500" stroke-dasharray="12 3"/><path d="M3 8a5 5 0 0 1 5-5" stroke="#d4502c" stroke-width="2.500" fill="none"/></svg><span>Phot...</span></div>
            <div class="w-[79px] h-[27px] flex items-center pl-[8px] gap-[4px] border border-[#4d545e] rounded-[3px]"><svg class="w-[16px] h-[16px] shrink-0" viewBox="0 0 16 16"><rect y="1" width="16" height="14" rx="2" fill="#e84a5c"/><path d="M0 8h16" stroke="#f8b0b8" stroke-width="2"/><path d="M2 13h12" stroke="#9ad07c" stroke-width="2"/></svg><span>02.jp...</span></div>
        </div>

        <!-- system tray -->
        <div class="w-[7px] h-[22px] ml-[17px] bg-[radial-gradient(circle,#7a828c_1px,transparent_1.200px)] bg-[length:3px_3px]"></div>
        <span class="ml-[10px] text-[12px] leading-none mb-[4px]">CH</span>
        <div class="w-[2px] h-[16px] ml-[6px] bg-[#d8d8d8]"></div>
        <span class="ml-[7px] text-[13px] font-bold leading-none">‹</span>
        <div class="flex items-center ml-[9px] gap-[1px]">
            <svg class="w-[16px] h-[18px]" viewBox="0 0 16 18"><rect x="1" y="2" width="6" height="14" rx="1" fill="#9aa4a8"/><path d="M8 6l5 3-5 3" stroke="#3d8fd6" stroke-width="2" fill="none"/></svg>
            <svg class="w-[16px] h-[16px]" viewBox="0 0 16 16"><rect width="16" height="16" fill="#1c4f8a" stroke="#fff"/><path d="M4 4v8h4M8 4h4v8" stroke="#fff" stroke-width="1.500" fill="none"/></svg>
            <svg class="w-[16px] h-[16px]" viewBox="0 0 16 16"><circle cx="8" cy="8" r="8" fill="#2d4fa0"/><path d="M6 3l4 3-4 3 4 3-4 2" stroke="#fff" fill="none"/><circle cx="12" cy="12" r="3.500" fill="#c8202a"/></svg>
            <svg class="w-[18px] h-[16px]" viewBox="0 0 18 16"><path d="M6 2a6 6 0 1 0 3 11A6 6 0 0 1 6 2z" fill="#c8c23c"/><path d="M13 1v9M10 10h6l-3 5z" fill="#a8b84c" stroke="#a8b84c"/></svg>
        </div>
        <div class="flex items-center ml-[15px] gap-[2px]">
            <svg class="w-[16px] h-[17px]" viewBox="0 0 16 17"><path d="M3 1v4M7 1v4" stroke="#eee" stroke-width="1.500"/><rect x="1" y="5" width="8" height="6" fill="#eee"/><rect x="9" y="2" width="6" height="13" fill="#7cc46a" stroke="#fff"/></svg>
            <svg class="w-[16px] h-[16px]" viewBox="0 0 16 16"><rect x="4" y="1" width="11" height="9" fill="#3a5f8c" stroke="#ddd"/><rect x="1" y="5" width="9" height="8" fill="#5a8fc4" stroke="#ddd"/><circle cx="12" cy="12" r="3.500" fill="#3da8d6"/></svg>
            <svg class="w-[14px] h-[14px]" viewBox="0 0 14 14"><path d="M1 5h3l4-4v12L4 9H1z" fill="#e8e8e8"/><path d="M10 4a4 4 0 0 1 0 6" stroke="#aaa" fill="none"/></svg>
        </div>
        <span class="ml-[11px] text-[12px] leading-none text-[#e8ecf0]">下午 09:36</span>
    </div>

</body>
</html>
